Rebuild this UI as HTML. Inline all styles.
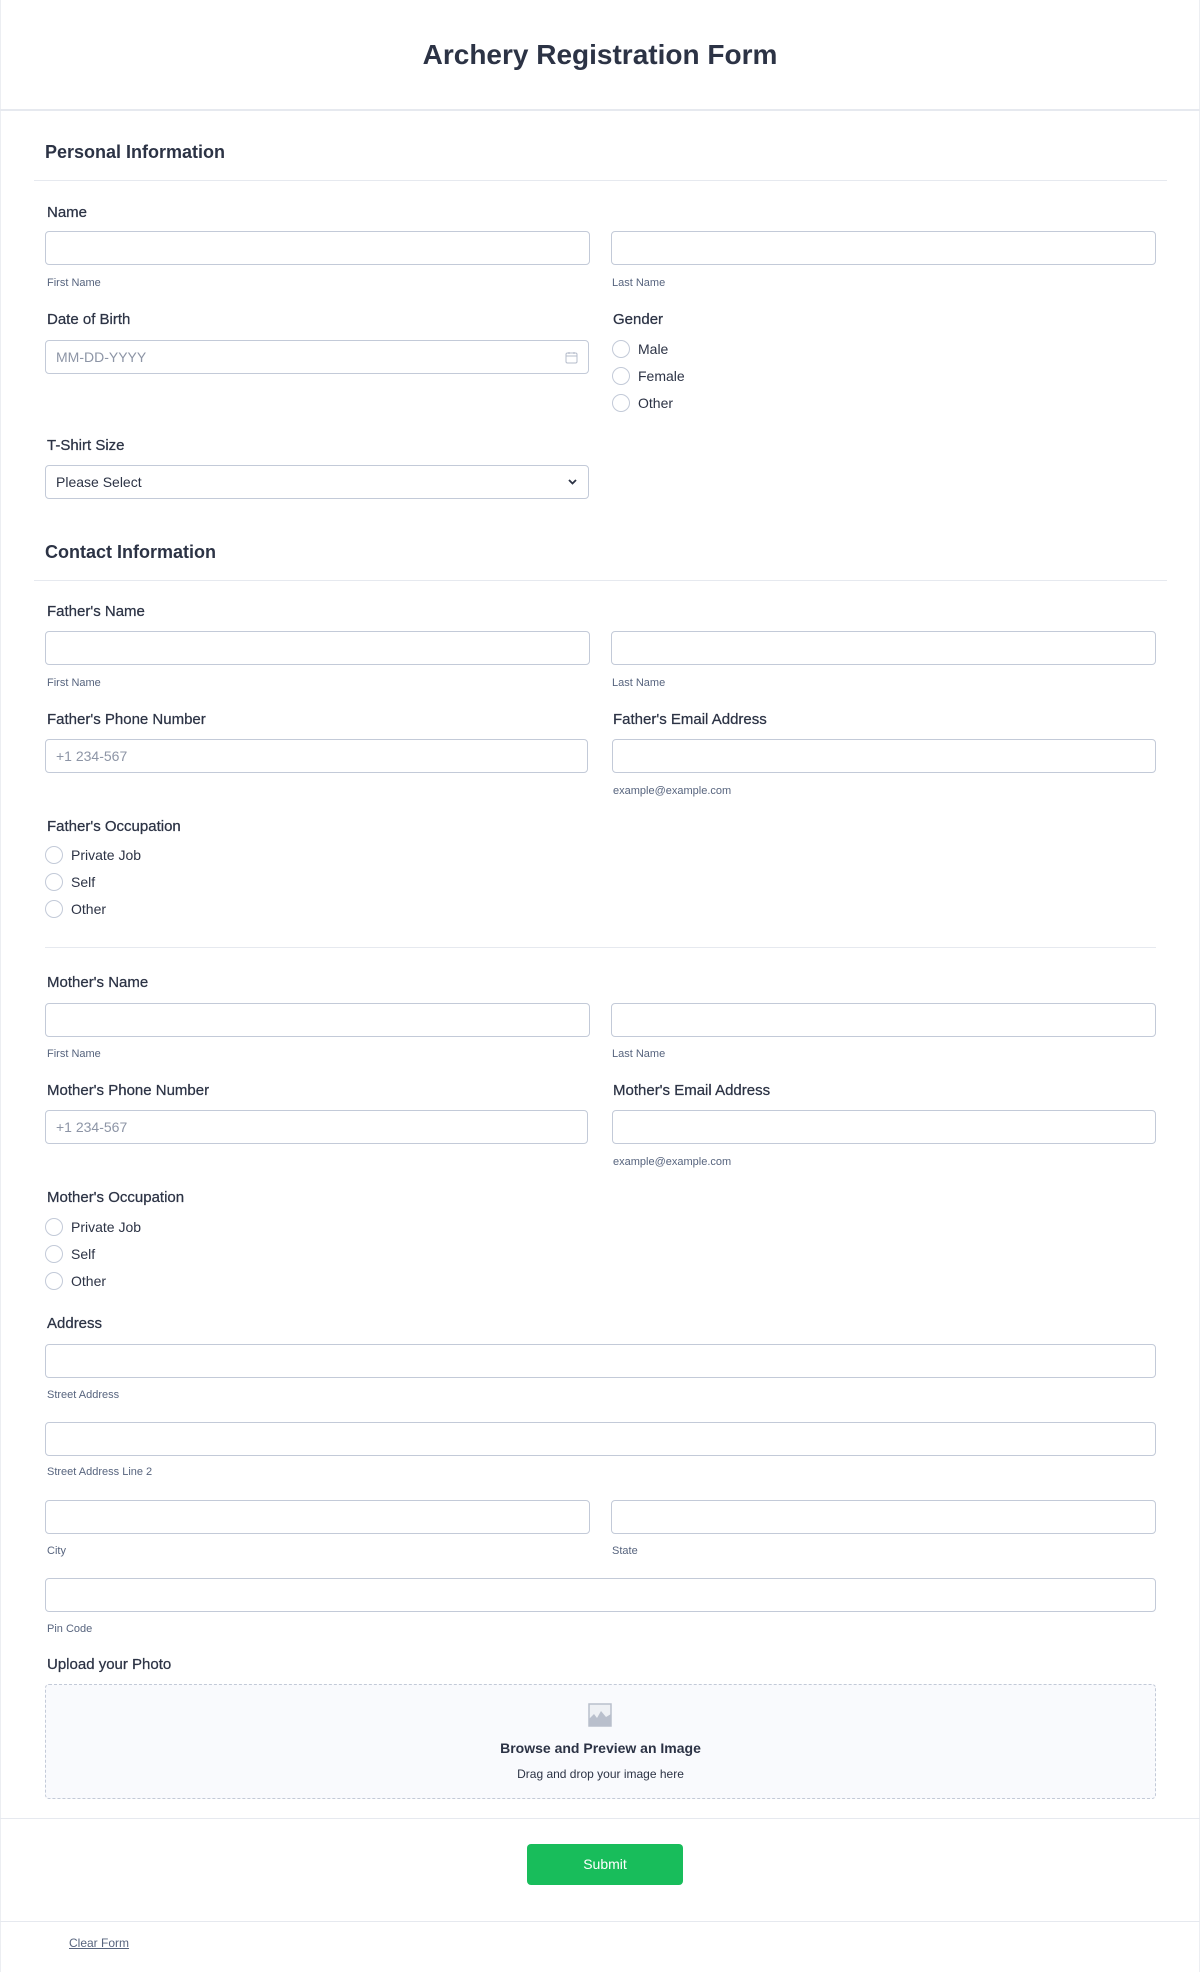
<!DOCTYPE html>
<html><head><meta charset="utf-8"><style>
*{box-sizing:border-box;margin:0;padding:0}
body{width:1200px;height:1972px;background:#fff;font-family:"Liberation Sans",Arial,sans-serif;color:#2c3345;position:relative;overflow:hidden}
.a{position:absolute}
.hl{position:absolute;height:1px;background:#e6e9ef}
.lbl{position:absolute;font-size:15px;color:#2c3345;line-height:18px;margin-top:2px;-webkit-text-stroke:0.25px #2c3345}
.sub{position:absolute;font-size:11px;color:#57647e;line-height:13px;margin-top:1px}
.in{position:absolute;height:34px;border:1px solid #c3cad8;border-radius:4px;background:#fff;font-size:14px;color:#8d95a6;padding-left:10px;line-height:32px}
.rd{position:absolute;width:18px;height:18px;border:1px solid #c3cad8;border-radius:50%}
.rt{position:absolute;font-size:14px;color:#2c3345;line-height:16px}
.h2{position:absolute;font-size:18px;font-weight:600;left:45px;margin-top:2px}
</style></head><body>
<div class="a" style="left:0;top:0;width:1200px;height:1972px;border-left:1px solid #eceef2;border-right:1px solid #eceef2"></div>
<div class="a" style="left:0;top:38px;width:1200px;text-align:center;font-size:28px;font-weight:600;line-height:34px">Archery Registration Form</div>
<div class="hl" style="left:0;top:109px;width:1200px;height:2px"></div>

<div class="h2" style="top:140px">Personal Information</div>
<div class="hl" style="left:34px;top:180px;width:1133px"></div>
<div class="lbl" style="left:47px;top:202px">Name</div>
<div class="in" style="left:45px;top:231px;width:545px"></div>
<div class="in" style="left:611px;top:231px;width:545px"></div>
<div class="sub" style="left:47px;top:276px">First Name</div>
<div class="sub" style="left:612px;top:276px">Last Name</div>
<div class="lbl" style="left:47px;top:309px">Date of Birth</div>
<div class="in" style="left:45px;top:340px;width:544px">MM-DD-YYYY
<svg class="a" style="right:10px;top:10px" width="13" height="13" viewBox="0 0 13 13" fill="none" stroke="#b5bccb" stroke-width="1"><rect x="1" y="2" width="11" height="10" rx="1.5"/><path d="M1 5h11M4 1v2M9 1v2"/></svg></div>
<div class="lbl" style="left:613px;top:309px">Gender</div>
<div class="rd" style="left:612px;top:340px"></div><div class="rt" style="left:638px;top:341px">Male</div>
<div class="rd" style="left:612px;top:367px"></div><div class="rt" style="left:638px;top:368px">Female</div>
<div class="rd" style="left:612px;top:394px"></div><div class="rt" style="left:638px;top:395px">Other</div>
<div class="lbl" style="left:47px;top:435px">T-Shirt Size</div>
<div class="in" style="left:45px;top:465px;width:544px;color:#2c3345">Please Select
<svg class="a" style="right:10px;top:12px" width="11" height="8" viewBox="0 0 11 8" fill="none" stroke="#2c3345" stroke-width="1.8"><path d="M2 2l3.5 3.5L9 2"/></svg></div>

<div class="h2" style="top:540px">Contact Information</div>
<div class="hl" style="left:34px;top:580px;width:1133px"></div>
<div class="lbl" style="left:47px;top:601px">Father's Name</div>
<div class="in" style="left:45px;top:631px;width:545px"></div>
<div class="in" style="left:611px;top:631px;width:545px"></div>
<div class="sub" style="left:47px;top:676px">First Name</div>
<div class="sub" style="left:612px;top:676px">Last Name</div>
<div class="lbl" style="left:47px;top:709px">Father's Phone Number</div>
<div class="lbl" style="left:613px;top:709px">Father's Email Address</div>
<div class="in" style="left:45px;top:739px;width:543px">+1 234-567</div>
<div class="in" style="left:612px;top:739px;width:544px"></div>
<div class="sub" style="left:613px;top:784px">example@example.com</div>
<div class="lbl" style="left:47px;top:816px">Father's Occupation</div>
<div class="rd" style="left:45px;top:846px"></div><div class="rt" style="left:71px;top:847px">Private Job</div>
<div class="rd" style="left:45px;top:873px"></div><div class="rt" style="left:71px;top:874px">Self</div>
<div class="rd" style="left:45px;top:900px"></div><div class="rt" style="left:71px;top:901px">Other</div>
<div class="hl" style="left:45px;top:947px;width:1111px"></div>

<div class="lbl" style="left:47px;top:972px">Mother's Name</div>
<div class="in" style="left:45px;top:1003px;width:545px"></div>
<div class="in" style="left:611px;top:1003px;width:545px"></div>
<div class="sub" style="left:47px;top:1047px">First Name</div>
<div class="sub" style="left:612px;top:1047px">Last Name</div>
<div class="lbl" style="left:47px;top:1080px">Mother's Phone Number</div>
<div class="lbl" style="left:613px;top:1080px">Mother's Email Address</div>
<div class="in" style="left:45px;top:1110px;width:543px">+1 234-567</div>
<div class="in" style="left:612px;top:1110px;width:544px"></div>
<div class="sub" style="left:613px;top:1155px">example@example.com</div>
<div class="lbl" style="left:47px;top:1187px">Mother's Occupation</div>
<div class="rd" style="left:45px;top:1218px"></div><div class="rt" style="left:71px;top:1219px">Private Job</div>
<div class="rd" style="left:45px;top:1245px"></div><div class="rt" style="left:71px;top:1246px">Self</div>
<div class="rd" style="left:45px;top:1272px"></div><div class="rt" style="left:71px;top:1273px">Other</div>

<div class="lbl" style="left:47px;top:1313px">Address</div>
<div class="in" style="left:45px;top:1344px;width:1111px"></div>
<div class="sub" style="left:47px;top:1388px">Street Address</div>
<div class="in" style="left:45px;top:1422px;width:1111px"></div>
<div class="sub" style="left:47px;top:1465px">Street Address Line 2</div>
<div class="in" style="left:45px;top:1500px;width:545px"></div>
<div class="in" style="left:611px;top:1500px;width:545px"></div>
<div class="sub" style="left:47px;top:1544px">City</div>
<div class="sub" style="left:612px;top:1544px">State</div>
<div class="in" style="left:45px;top:1578px;width:1111px"></div>
<div class="sub" style="left:47px;top:1622px">Pin Code</div>

<div class="lbl" style="left:47px;top:1654px">Upload your Photo</div>
<div class="a" style="left:45px;top:1684px;width:1111px;height:115px;border:1px dashed #c3cad8;border-radius:4px;background:#f9fafd"></div>
<svg class="a" style="left:588px;top:1703px" width="24" height="24" viewBox="0 0 24 24"><rect x="1" y="1" width="22" height="22" fill="#eef0f4" stroke="#b9bfcc" stroke-width="1.5"/><path d="M1 23V16l5-5 3 4 4-7 5 6 5-3v12z" fill="#b9bfcc"/></svg>
<div class="a" style="left:45px;top:1740px;width:1111px;text-align:center;font-size:14px;font-weight:600">Browse and Preview an Image</div>
<div class="a" style="left:45px;top:1767px;width:1111px;text-align:center;font-size:12px">Drag and drop your image here</div>

<div class="hl" style="left:0;top:1818px;width:1200px"></div>
<div class="a" style="left:527px;top:1844px;width:156px;height:41px;background:#18bd5b;border-radius:4px;color:#fff;font-size:14px;font-weight:500;text-align:center;line-height:41px">Submit</div>
<div class="hl" style="left:0;top:1921px;width:1200px"></div>
<div class="a" style="left:69px;top:1936px;font-size:12px;color:#57647e;text-decoration:underline">Clear Form</div>
</body></html>
